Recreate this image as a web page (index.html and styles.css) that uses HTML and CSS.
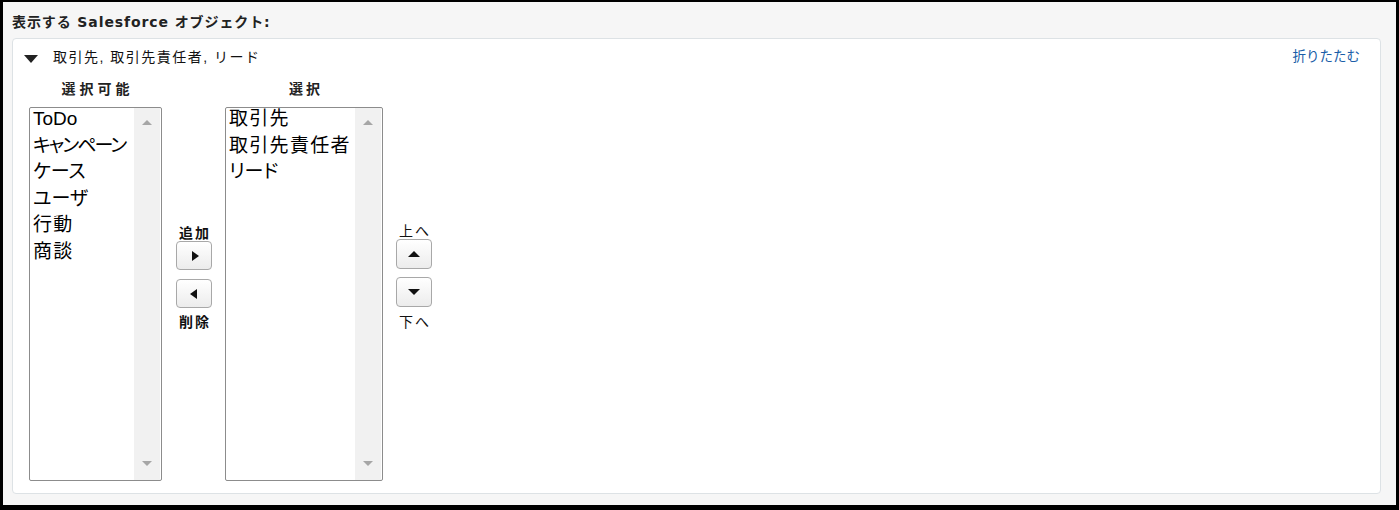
FILE: index.html
```html
<!DOCTYPE html>
<html lang="ja">
<head>
<meta charset="utf-8">
<title>表示する Salesforce オブジェクト</title>
<link rel="stylesheet" href="styles.css">
</head>
<body>
<div class="title">表示する Salesforce オブジェクト:</div>
<div class="panel">
  <div class="panel-head">
    <div class="head-left"><span class="caret"></span><span class="head-text">取引先, 取引先責任者, リード</span></div>
    <a class="collapse" href="#">折りたたむ</a>
  </div>
  <div class="picker">
    <div class="col col-avail">
      <div class="col-label">選択可能</div>
      <div class="listbox">
        <div class="items">
          <div class="item">ToDo</div>
          <div class="item kana-tight">キャンペーン</div>
          <div class="item">ケース</div>
          <div class="item">ユーザ</div>
          <div class="item kanji">行動</div>
          <div class="item kanji">商談</div>
        </div>
        <div class="scroll"><span class="sarrow up"></span><span class="sarrow down"></span></div>
      </div>
    </div>
    <div class="btns btns-add">
      <div class="btn-label bold">追加</div>
      <div class="btn"><span class="tri right"></span></div>
      <div class="btn"><span class="tri left"></span></div>
      <div class="btn-label bold">削除</div>
    </div>
    <div class="col col-sel">
      <div class="col-label">選択</div>
      <div class="listbox">
        <div class="items">
          <div class="item kanji">取引先</div>
          <div class="item kanji">取引先責任者</div>
          <div class="item">リード</div>
        </div>
        <div class="scroll"><span class="sarrow up"></span><span class="sarrow down"></span></div>
      </div>
    </div>
    <div class="btns btns-order">
      <div class="btn-label">上へ</div>
      <div class="btn"><span class="tri up"></span></div>
      <div class="btn"><span class="tri down"></span></div>
      <div class="btn-label">下へ</div>
    </div>
  </div>
</div>
</body>
</html>
```
FILE: styles.css
```css
html {
  background: #000;
  margin: 0;
  padding: 0;
}
body {
  margin: 2px 3px 5px 3px;
  height: 503px;
  background: #f6f6f6;
  font-family: "Liberation Sans", "Noto Sans CJK JP", sans-serif;
  color: #000;
  overflow: hidden;
}
.title {
  padding: 11px 0 0 9px;
  height: 18px;
  line-height: 18px;
  margin-bottom: 7px;
  font-family: "DejaVu Sans", "Noto Sans CJK JP", sans-serif;
  font-weight: bold;
  font-size: 14px;
  color: #222;
  letter-spacing: 0.9px;
}
.panel {
  margin-left: 9px;
  width: 1367px;
  background: #fff;
  border: 1px solid #dde2e5;
  border-radius: 4px;
  padding: 9px 0 12px 0;
}
.panel-head {
  display: flex;
  justify-content: space-between;
  align-items: center;
  height: 18px;
  line-height: 18px;
  padding: 0 20px 0 11px;
}
.head-left {
  display: flex;
  align-items: center;
}
.caret {
  width: 0;
  height: 0;
  border-left: 7px solid transparent;
  border-right: 7px solid transparent;
  border-top: 8px solid #222;
  margin-top: 4px;
  margin-right: 15px;
}
.head-text {
  font-size: 14px;
  letter-spacing: 1.5px;
  color: #111;
}
.collapse {
  font-size: 13.5px;
  color: #1a5ea8;
  text-decoration: none;
}
.picker {
  display: flex;
  align-items: flex-start;
  margin-top: 14px;
  padding-left: 16px;
}
.col {
  display: flex;
  flex-direction: column;
}
.col-avail { width: 133px; }
.col-sel { width: 158px; }
.col-label {
  height: 18px;
  line-height: 18px;
  margin-bottom: 9px;
  text-align: center;
  font-weight: bold;
  font-size: 14px;
  letter-spacing: 4px;
  padding-left: 4px;
  color: #222;
}
.col-sel .col-label {
  letter-spacing: 3px;
}
.listbox {
  height: 372px;
  border: 1px solid #8c8c8c;
  border-radius: 2px;
  display: flex;
  background: #fff;
  overflow: hidden;
}
.items {
  flex: 1;
  padding-left: 3px;
  margin-top: -2px;
  overflow: hidden;
}
.item {
  font-size: 19px;
  line-height: 26.6px;
  white-space: nowrap;
  font-feature-settings: "palt";
  color: #000;
}
.item.kanji {
  letter-spacing: 1.3px;
}
.item.kana-tight {
  letter-spacing: -2px;
}
.scroll {
  width: 26px;
  margin-right: 1px;
  background: #f1f1f1;
  display: flex;
  flex-direction: column;
  justify-content: space-between;
  align-items: center;
  padding: 12px 0 14px 0;
}
.sarrow {
  width: 0;
  height: 0;
  border-left: 5px solid transparent;
  border-right: 5px solid transparent;
}
.sarrow.up { border-bottom: 5px solid #a6a6a6; }
.sarrow.down { border-top: 5px solid #a6a6a6; }
.btns {
  width: 36px;
  display: flex;
  flex-direction: column;
  align-items: center;
}
.btns-add {
  margin: 145px 13px 0 14px;
}
.btns-order {
  margin: 143px 0 0 13px;
}
.btn-label {
  height: 16px;
  line-height: 16px;
  font-size: 14px;
  letter-spacing: 2px;
  padding-left: 2px;
  color: #111;
}
.btn-label.bold { font-weight: bold; }
.btn {
  width: 34px;
  height: 27px;
  border: 1px solid #a8a8a8;
  border-radius: 4px;
  background: linear-gradient(#ffffff, #ececec);
  display: flex;
  align-items: center;
  justify-content: center;
}
.btns-order .btn { height: 28px; }
.btn + .btn { margin-top: 9px; margin-bottom: 6px; }
.btns-add .btn:first-of-type { margin-top: 1px; }
.btns-order .btn:first-of-type { margin-top: 3px; }
.btns-order .btn + .btn { margin-top: 8px; margin-bottom: 7px; }
.tri {
  width: 0;
  height: 0;
}
.tri.right {
  border-top: 5px solid transparent;
  border-bottom: 5px solid transparent;
  border-left: 7px solid #111;
  margin-left: 2px;
}
.tri.left {
  border-top: 5px solid transparent;
  border-bottom: 5px solid transparent;
  border-right: 7px solid #111;
  margin-right: 2px;
}
.tri.up {
  border-left: 6px solid transparent;
  border-right: 6px solid transparent;
  border-bottom: 6px solid #111;
}
.tri.down {
  border-left: 6px solid transparent;
  border-right: 6px solid transparent;
  border-top: 6px solid #111;
}
```
